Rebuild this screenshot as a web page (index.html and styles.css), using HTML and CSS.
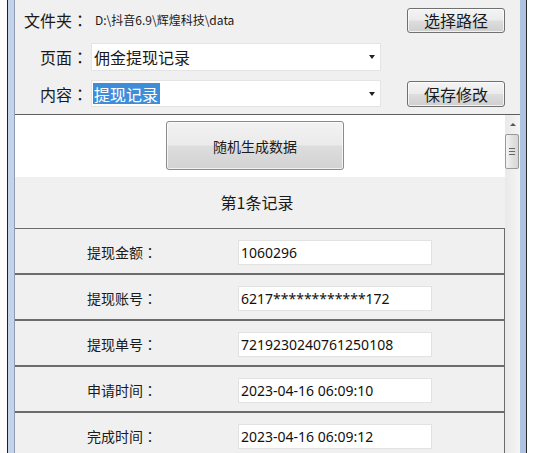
FILE: index.html
```html
<!DOCTYPE html>
<html lang="zh-CN">
  <head>
    <meta charset="UTF-8" />
    <meta name="viewport" content="width=device-width, initial-scale=1.0" />
    <title>提现记录</title>
    <link rel="stylesheet" href="styles.css">
  </head>
  <body>
    <div class="screen">
      <div class="frame-left"></div>

      <div class="window">
        <div class="toolbar">
          <div class="row row-path">
            <span class="label label-big">文件夹<span class="colon" lang="zh-TW">：</span></span>
            <span class="path">D:\抖音6.9\辉煌科技\data</span>
            <button class="btn">选择路径</button>
          </div>
          <div class="row row-page">
            <span class="label">页面<span class="colon" lang="zh-TW">：</span></span>
            <div class="select">
              <span>佣金提现记录</span>
              <i class="arrow"></i>
            </div>
          </div>
          <div class="row row-content">
            <span class="label">内容<span class="colon" lang="zh-TW">：</span></span>
            <div class="select">
              <span class="selected">提现记录</span>
              <i class="arrow"></i>
            </div>
            <button class="btn">保存修改</button>
          </div>
        </div>

        <div class="scroller">
          <div class="records">
            <div class="gen-area">
              <button class="btn btn-big">随机生成数据</button>
            </div>
            <div class="record-title">第1条记录</div>
            <div class="record-table">
              <div class="record-row">
                <span class="field-name">提现金额<span class="colon" lang="zh-TW">：</span></span>
                <div class="field-value">1060296</div>
              </div>
              <div class="record-row">
                <span class="field-name">提现账号<span class="colon" lang="zh-TW">：</span></span>
                <div class="field-value">6217************172</div>
              </div>
              <div class="record-row">
                <span class="field-name">提现单号<span class="colon" lang="zh-TW">：</span></span>
                <div class="field-value">7219230240761250108</div>
              </div>
              <div class="record-row">
                <span class="field-name">申请时间<span class="colon" lang="zh-TW">：</span></span>
                <div class="field-value">2023-04-16 06:09:10</div>
              </div>
              <div class="record-row">
                <span class="field-name">完成时间<span class="colon" lang="zh-TW">：</span></span>
                <div class="field-value">2023-04-16 06:09:12</div>
              </div>
            </div>
          </div>

          <div class="scrollbar">
            <div class="scroll-up"></div>
            <div class="scroll-thumb">
              <i></i><i></i><i></i>
            </div>
          </div>
        </div>
      </div>

      <div class="frame-right"></div>
    </div>
  </body>
</html>
```

FILE: styles.css
```css
* {
  margin: 0;
  padding: 0;
  box-sizing: border-box;
}

body {
  font-family: "Noto Sans CJK SC", "Noto Sans", sans-serif;
  background-color: #fff;
  color: #1a1a1a;
  width: 552px;
  height: 453px;
  overflow: hidden;
}

.screen {
  display: flex;
  height: 453px;
}

.frame-left {
  width: 15px;
  flex-shrink: 0;
  background: linear-gradient(to right, #fbfbfb 0 7px, #1e1e1e 7px 8px, #c4d3e9 8px 14px, #8d9db5 14px 15px);
}

.frame-right {
  width: 7px;
  flex-shrink: 0;
  background: linear-gradient(to right, #adc4e0 0 6px, #2b2b2b 6px 7px);
}

.window {
  width: 505px;
  flex-shrink: 0;
  background-color: #f0f0f0;
  display: flex;
  flex-direction: column;
}

/* centred full-width colon, like the original UI font */
.colon {
  font-family: "Noto Sans CJK TC", sans-serif;
}

/* top panel */
.toolbar {
  height: 115px;
  padding-top: 7px;
  border-bottom: 1px solid #5e5e5e;
}

.row {
  display: flex;
  align-items: center;
}

.row-path {
  height: 26px;
}

.row-page {
  height: 28px;
  margin-top: 10px;
}

.row-content {
  height: 27px;
  margin-top: 9px;
}

.label {
  width: 76px;
  padding-right: 3px;
  text-align: right;
  font-size: 16px;
  line-height: 20px;
  color: #1a1a1a;
}

.path {
  width: 290px;
  padding-left: 4px;
  font-size: 12px;
  line-height: 16px;
  color: #1a1a1a;
}

.select {
  position: relative;
  width: 290px;
  height: 100%;
  background-color: #fff;
  border: 1px solid #e4e4e4;
  display: flex;
  align-items: center;
  font-size: 16px;
  line-height: 20px;
  padding-left: 1px;
}

.select span {
  padding: 0 1px;
}

.select .selected {
  background-color: #3d8ddb;
  color: #fff;
  padding: 1px 2px 0 1px;
}

.arrow {
  position: absolute;
  right: 5px;
  top: 50%;
  margin-top: -2px;
  width: 0;
  height: 0;
  border-left: 3px solid transparent;
  border-right: 3px solid transparent;
  border-top: 4px solid #222;
}

.btn {
  width: 98px;
  height: 25px;
  margin-left: 26px;
  font-family: "Noto Sans CJK SC", sans-serif;
  font-size: 16px;
  line-height: 20px;
  color: #1a1a1a;
  border: 1px solid #707070;
  border-radius: 3px;
  background: linear-gradient(to bottom, #f4f4f4 0%, #ebebeb 48%, #dddddd 52%, #cfcfcf 100%);
  box-shadow: inset 0 0 0 1px rgba(255, 255, 255, 0.7);
}

.row-content .btn {
  height: 26px;
  margin-top: 1px;
}

/* record area */
.scroller {
  flex: 1;
  display: flex;
  overflow: hidden;
}

.records {
  width: 490px;
}

.gen-area {
  height: 62px;
  background-color: #fff;
  padding-top: 6px;
}

.btn-big {
  width: 178px;
  height: 49px;
  margin-left: 151px;
  font-size: 14px;
  background: linear-gradient(to bottom, #f2f2f2 0%, #ebebeb 48%, #dddddd 52%, #d2d2d2 100%);
  border-color: #8a8a8a;
}

.record-title {
  height: 51px;
  text-align: center;
  font-size: 16px;
  line-height: 20px;
  padding-top: 15px;
  padding-right: 6px;
  color: #1a1a1a;
}

.record-table {
  border-top: 1px solid #6b6b6b;
  border-right: 1px solid #6b6b6b;
  width: 490px;
}

.record-row {
  height: 46px;
  display: flex;
  align-items: center;
  padding-top: 2px;
  border-bottom: 2px solid #6b6b6b;
}

.field-name {
  width: 223px;
  padding-left: 72px;
  font-size: 14px;
  line-height: 18px;
  color: #1a1a1a;
}

.field-value {
  width: 194px;
  height: 25px;
  background-color: #fff;
  border: 1px solid #e2e2e2;
  padding-left: 2px;
  font-family: "Noto Sans", "Noto Sans CJK SC", sans-serif;
  font-size: 14px;
  line-height: 23px;
  color: #111;
}

/* scrollbar */
.scrollbar {
  width: 15px;
  background: linear-gradient(to right, #e9e9e9, #f5f5f5);
  padding-top: 8px;
}

.scroll-up {
  width: 0;
  height: 0;
  margin: 0 auto;
  border-left: 3px solid transparent;
  border-right: 3px solid transparent;
  border-bottom: 3px solid #555;
}

.scroll-thumb {
  margin-top: 8px;
  width: 14px;
  height: 35px;
  border: 1px solid #999;
  border-radius: 2px;
  background: linear-gradient(to right, #f4f4f4, #e2e2e2 50%, #d6d6d6);
  display: flex;
  flex-direction: column;
  align-items: center;
  justify-content: center;
  gap: 2px;
}

.scroll-thumb i {
  display: block;
  width: 6px;
  height: 1px;
  background-color: #666;
}
```
